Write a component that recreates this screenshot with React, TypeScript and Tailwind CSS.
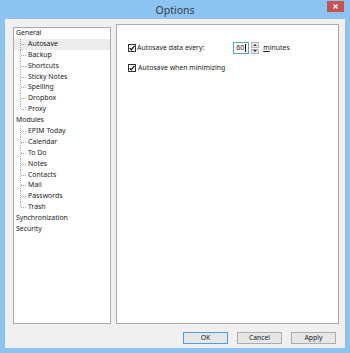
import { FC } from "react";

const font = { fontFamily: '"Noto Sans", "Open Sans", sans-serif' };

type Node = { label: string; children?: string[] };

const tree: Node[] = [
  {
    label: "General",
    children: ["Autosave", "Backup", "Shortcuts", "Sticky Notes", "Spelling", "Dropbox", "Proxy"],
  },
  {
    label: "Modules",
    children: ["EPIM Today", "Calendar", "To Do", "Notes", "Contacts", "Mail", "Passwords", "Trash"],
  },
  { label: "Synchronization" },
  { label: "Security" },
];

// dotted tree guide, last child gets the "└" shape
const Guide: FC<{ last: boolean }> = ({ last }) => (
  <svg width="13" height="11" className="shrink-0">
    <line x1="6.5" y1="0" x2="6.5" y2={last ? 5.5 : 11} stroke="#a8a8a8" strokeDasharray="1 1" />
    <line x1="7" y1="5.5" x2="13" y2="5.5" stroke="#a8a8a8" strokeDasharray="1 1" />
  </svg>
);

const Check: FC = () => (
  <span className="w-[8px] h-[8px] border border-[#333] bg-white flex items-center justify-center shrink-0">
    <svg width="6" height="6" viewBox="0 0 6 6">
      <path d="M0.6 3.1 L2.3 4.8 L5.4 0.9" fill="none" stroke="#111" strokeWidth="1.3" />
    </svg>
  </span>
);

const Btn: FC<{ label: string; primary?: boolean }> = ({ label, primary }) => (
  <div
    className={`w-[45px] h-[12px] flex items-center justify-center text-[6.8px] leading-none bg-[#e6e6e6] border ${
      primary ? "border-[#4a9be8]" : "border-[#adadad]"
    }`}
  >
    {label}
  </div>
);

const App: FC = () => {
  return (
    <div className="w-[350px] h-[353px] bg-[#8cc3f0] flex flex-col text-[#1a1a1a]" style={font}>
      {/* title bar */}
      <div className="h-[19px] flex items-center relative shrink-0">
        <div className="flex-1 text-center text-[10.5px] text-[#34404c] leading-none pt-[1px]">Options</div>
        <div className="absolute right-[6px] top-[1px] w-[17px] h-[11px] bg-[#c75050] flex items-center justify-center">
          <svg width="5" height="5" viewBox="0 0 5 5">
            <path d="M0.5 0.5 L4.5 4.5 M4.5 0.5 L0.5 4.5" stroke="#fff" strokeWidth="1.3" />
          </svg>
        </div>
      </div>

      {/* client */}
      <div className="mx-[5px] h-[329px] bg-[#f0f0f0] flex flex-col">
        <div className="flex pl-[8px] pt-[5px] gap-[5px]">
          {/* tree */}
          <div className="w-[98px] h-[297px] mt-[3px] bg-white border border-[#ababab] flex flex-col text-[6.9px] leading-none">
            {tree.map((node) => (
              <div key={node.label} className="flex flex-col">
                <div className="h-[10.9px] flex items-center pl-[2px]">{node.label}</div>
                {node.children?.map((c, i) => (
                  <div
                    key={c}
                    className={`h-[10.9px] flex items-center ${c === "Autosave" ? "bg-[#ececec]" : ""}`}
                  >
                    <Guide last={i === node.children!.length - 1} />
                    <span className="ml-[1px]">{c}</span>
                  </div>
                ))}
              </div>
            ))}
          </div>

          {/* settings panel */}
          <div className="w-[223px] h-[300px] bg-white border border-[#ababab] flex flex-col pl-[11px] pt-[17px] text-[6.9px] leading-none">
            <div className="flex items-center h-[12px]">
              <Check />
              <span className="ml-[1px]">Autosave data every:</span>
              <div className="ml-[29px] w-[16px] h-[12px] border border-[#5aa0e6] flex items-center pl-[2px]">
                60<span className="ml-[1px] w-[1px] h-[8px] bg-black" />
              </div>
              <div className="ml-[2px] w-[8px] h-[12px] flex flex-col gap-[1px]">
                <div className="flex-1 border border-[#b5b5b5] bg-[#ececec] flex items-center justify-center">
                  <svg width="4" height="2" viewBox="0 0 4 2"><path d="M0 2 L2 0 L4 2Z" fill="#333" /></svg>
                </div>
                <div className="flex-1 border border-[#b5b5b5] bg-[#ececec] flex items-center justify-center">
                  <svg width="4" height="2" viewBox="0 0 4 2"><path d="M0 0 L2 2 L4 0Z" fill="#333" /></svg>
                </div>
              </div>
              <span className="ml-[4px]">
                <span className="underline">m</span>inutes
              </span>
            </div>
            <div className="flex items-center h-[12px] mt-[8px]">
              <Check />
              <span className="ml-[2px]">Autosave when minimizing</span>
            </div>
          </div>
        </div>

        {/* buttons */}
        <div className="flex justify-end gap-[9px] pr-[9px] mt-[8px]">
          <Btn label="OK" primary />
          <Btn label="Cancel" />
          <Btn label="Apply" />
        </div>
      </div>
    </div>
  );
};

export default App;
